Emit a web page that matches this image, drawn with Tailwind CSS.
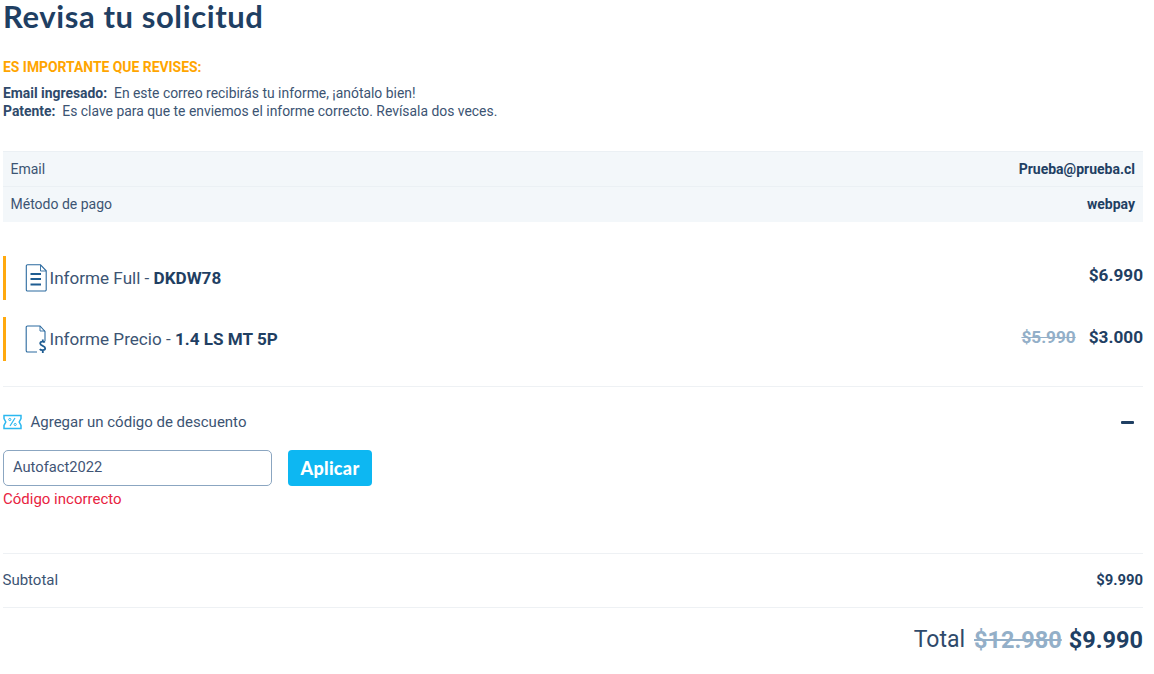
<!DOCTYPE html>
<html lang="es">
<head>
<meta charset="utf-8">
<script src="https://cdn.jsdelivr.net/npm/@tailwindcss/browser@4"></script>
</head>
<body class="bg-white">
<div class="w-[1154px] h-[674px] overflow-hidden pl-[3px] pr-[11px] font-['Roboto',sans-serif] text-[#1f3f63]">
  <h1 class="font-['Lato',sans-serif] font-bold text-[31px] leading-[32px] tracking-[0.6px] h-[34px]">Revisa tu solicitud</h1>
  <p class="mt-[25px] text-[13.9px] leading-[17px] font-bold text-[#ffa500]">ES IMPORTANTE QUE REVISES:</p>
  <div class="mt-[8px] text-[13.9px] leading-[18px] text-[#3c5473]">
    <p><b class="font-bold text-[#2f4a6b]">Email ingresado:</b>&nbsp; En este correo recibirás tu informe, ¡anótalo bien!</p>
    <p><b class="font-bold text-[#2f4a6b]">Patente:</b>&nbsp; Es clave para que te enviemos el informe correcto. Revísala dos veces.</p>
  </div>
  <div class="mt-[31px] bg-[#f3f7fa] text-[14px] text-[#3c5473]">
    <div class="h-[36px] flex items-center justify-between pl-[7.5px] pr-[8px] border-t border-b border-[#ebf0f4]"><span>Email</span><b class="font-bold text-[#1f3f63]">Prueba@prueba.cl</b></div>
    <div class="h-[35px] flex items-center justify-between pl-[7.5px] pr-[8px]"><span>Método de pago</span><b class="font-bold text-[#1f3f63]">webpay</b></div>
  </div>
  <div class="mt-[34px] h-[44px] flex items-start justify-between border-l-[3px] border-[#ffa90f]">
    <div class="flex items-center h-[44px] text-[17.100px] text-[#3c5473]">
      <svg class="ml-[19px] w-[24px] h-[28px] mb-[1px] -translate-x-[1px]" viewBox="0 0 24 28" fill="none" stroke="#2b6a9f"><path d="M3.500 .8h13l5.700 6v19a1.200 1.200 0 0 1-1.200 1.200h-17.500a1.200 1.200 0 0 1-1.200-1.200v-23.800a1.200 1.200 0 0 1 1.200-1.200z" stroke-width="1.100"/><path d="M16.500 1v6h5.500" stroke-width=".9"/><path d="M6.500 10h10.500M6.500 15h10.500M6.500 20.500h10.500" stroke="#1f5d92" stroke-width="1.800"/></svg>
      <span class="mt-[2px] ml-[0.5px]">Informe Full - <b class="font-bold text-[#1f3f63]">DKDW78</b></span>
    </div>
    <b class="font-bold text-[17.200px] leading-[20px] mt-[9px]">$6.990</b>
  </div>
  <div class="mt-[17px] h-[44px] flex items-start justify-between border-l-[3px] border-[#ffa90f]">
    <div class="flex items-center h-[44px] text-[17.100px] text-[#3c5473]">
      <svg class="ml-[20px] w-[23px] h-[29px] -translate-x-[1px]" viewBox="0 0 23 29" fill="none" stroke="#2b6a9f"><path d="M12 27h-9.500a1.300 1.300 0 0 1-1.300-1.300v-23.400a1.300 1.300 0 0 1 1.300-1.300h12.500l5 5.500v9.500" stroke-width="1.100"/><path d="M15 1v5h5" stroke-width=".9"/><path d="M19.800 17.500c-.6-1.300-4.600-1.500-4.600 1 0 2.800 5 2 5 4.700 0 2.500-4.600 2.300-5.300.8M17.800 14.500v2M17.800 25.500v2.500" stroke="#1f5d92" stroke-width="1.800"/></svg>
      <span class="mt-[2px] ml-[0.5px]">Informe Precio - <b class="font-bold text-[#1f3f63]">1.4 LS MT 5P</b></span>
    </div>
    <div class="font-bold text-[17.200px] leading-[20px] mt-[10px] flex gap-[13px]"><s class="text-[#93afc8]">$5.990</s><span>$3.000</span></div>
  </div>
  <div class="mt-[25px] border-t border-[#eef1f4] pt-[25px]">
    <div class="flex items-center justify-between h-[20px]">
      <div class="flex items-center text-[15px] text-[#3c5473]">
        <svg class="w-[19px] h-[16px]" viewBox="0 0 19 16" fill="none" stroke="#2bb8f0" stroke-width="1.500"><path d="M1 1.500h17v3l-1.800 3.500 1.800 3.500v3h-17v-3l1.800-3.500-1.800-3.500z"/><path d="M12 4l-5 8" stroke-width="1.200"/><circle cx="6.800" cy="5.500" r="1.100" stroke-width="1"/><circle cx="12.200" cy="10.500" r="1.100" stroke-width="1"/></svg>
        <span class="ml-[8.500px]">Agregar un código de descuento</span>
      </div>
      <div class="w-[13px] h-[3px] bg-[#1f3f63] rounded-[1px] mr-[9px]"></div>
    </div>
    <div class="mt-[18px] flex gap-[16px]">
      <div class="w-[269px] h-[36px] flex items-center pl-[9px] pb-[2px] border border-[#8ba6c1] rounded-[5px] text-[14.700px] text-[#3f5475]">Autofact2022</div>
      <button class="w-[84px] h-[36px] bg-[#0db7f2] rounded-[4px] text-white font-black tracking-[0.3px] font-['Lato',sans-serif] text-[18px]">Aplicar</button>
    </div>
    <p class="mt-[3px] text-[15px] leading-[20px] text-[#e8233f]">Código incorrecto</p>
  </div>
  <div class="mt-[44px] border-t border-[#eef1f4] h-[54px] flex items-center justify-between text-[15px] text-[#3c5473]"><span class="-ml-[0.5px]">Subtotal</span><b class="font-bold text-[#1f3f63] text-[14.800px]">$9.990</b></div>
  <div class="border-t border-[#eef1f4] h-[64px] pt-[2px] flex items-center justify-end text-[23.500px]"><span class="text-[#2f4a6b] text-[23px]">Total</span><b class="ml-[9px] font-bold text-[#93afc8] line-through">$12.980</b><b class="ml-[7px] font-bold">$9.990</b></div>
</div>
</body>
</html>
